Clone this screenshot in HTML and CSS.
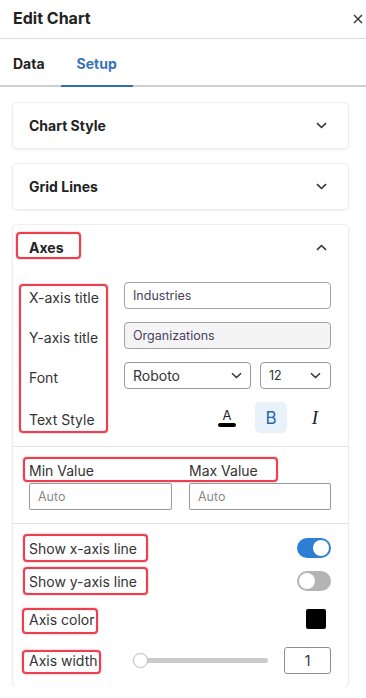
FILE: index.html
```html
<!DOCTYPE html>
<html lang="en">
<head>
    <meta charset="UTF-8">
    <meta name="viewport" content="width=device-width, initial-scale=1.0">
    <title>Edit Chart</title>
    <link rel="stylesheet" href="styles.css">
</head>
<body>
    <div class="panel">
        <header class="panel-header">
            <h1 class="panel-title">Edit Chart</h1>
            <button class="close-btn" aria-label="Close">
                <svg width="10" height="10" viewBox="0 0 10 10"><path d="M1 1L9 9M9 1L1 9" stroke="#333" stroke-width="1.4" fill="none"/></svg>
            </button>
        </header>

        <nav class="tabs">
            <span class="tab">Data</span>
            <span class="tab tab-active">Setup</span>
        </nav>

        <main class="panel-body">
            <section class="card">
                <div class="card-head">
                    <h2 class="card-title">Chart Style</h2>
                    <svg class="chevron" width="11" height="7" viewBox="0 0 11 7"><path d="M1 1.2L5.5 5.5L10 1.2" stroke="#333" stroke-width="1.6" fill="none"/></svg>
                </div>
            </section>

            <section class="card">
                <div class="card-head">
                    <h2 class="card-title">Grid Lines</h2>
                    <svg class="chevron" width="11" height="7" viewBox="0 0 11 7"><path d="M1 1.2L5.5 5.5L10 1.2" stroke="#333" stroke-width="1.6" fill="none"/></svg>
                </div>
            </section>

            <section class="card">
                <div class="card-head">
                    <h2 class="card-title"><span class="mark mark-axes">Axes</span></h2>
                    <svg class="chevron" width="11" height="7" viewBox="0 0 11 7"><path d="M1 5.8L5.5 1.5L10 5.8" stroke="#333" stroke-width="1.6" fill="none"/></svg>
                </div>

                <div class="card-section fields">
                    <div class="label-col">
                        <label class="field-label">X-axis title</label>
                        <label class="field-label">Y-axis title</label>
                        <label class="field-label">Font</label>
                        <label class="field-label field-label-tall">Text Style</label>
                    </div>
                    <div class="control-col">
                        <div class="text-input">Industries</div>
                        <div class="text-input text-input-filled">Organizations</div>
                        <div class="select-row">
                            <div class="select select-font">
                                <span>Roboto</span>
                                <svg width="11" height="7" viewBox="0 0 11 7"><path d="M1 1.2L5.5 5.5L10 1.2" stroke="#333" stroke-width="1.5" fill="none"/></svg>
                            </div>
                            <div class="select select-size">
                                <span>12</span>
                                <svg width="11" height="7" viewBox="0 0 11 7"><path d="M1 1.2L5.5 5.5L10 1.2" stroke="#333" stroke-width="1.5" fill="none"/></svg>
                            </div>
                        </div>
                        <div class="style-btns">
                            <button class="style-btn">
                                <span class="color-a">A</span>
                                <span class="color-bar"></span>
                            </button>
                            <button class="style-btn style-btn-on">B</button>
                            <button class="style-btn style-italic">I</button>
                        </div>
                    </div>
                </div>

                <div class="card-section range-fields">
                    <span class="range-mark"></span>
                    <label class="small-label">Min Value</label>
                    <label class="small-label">Max Value</label>
                    <div class="text-input text-input-square placeholder">Auto</div>
                    <div class="text-input text-input-square placeholder">Auto</div>
                </div>

                <div class="card-section line-rows">
                    <div class="row">
                        <span class="mark mark-line">Show x-axis line</span>
                        <span class="toggle toggle-on"><span class="knob"></span></span>
                    </div>
                    <div class="row">
                        <span class="mark mark-line">Show y-axis line</span>
                        <span class="toggle"><span class="knob"></span></span>
                    </div>
                    <div class="row row-color">
                        <span class="mark mark-color">Axis color</span>
                        <span class="swatch"></span>
                    </div>
                    <div class="row row-width">
                        <span class="row-label"><span class="mark mark-width">Axis width</span></span>
                        <div class="slider">
                            <span class="slider-thumb"></span>
                        </div>
                        <div class="num-box">1</div>
                    </div>
                </div>
            </section>
        </main>
    </div>
</body>
</html>
```

FILE: styles.css
```css
*,::before,::after {
    box-sizing: border-box;
}
body {
    margin: 0;
    font-family: Inter, 'Noto Sans', sans-serif;
    color: #333;
    background: #fff;
    font-size: 14px;
}
h1, h2 {
    margin: 0;
}
button {
    font-family: inherit;
    border: none;
    background: none;
    padding: 0;
    cursor: pointer;
}

/* header */
.panel-header {
    height: 39px;
    padding: 0 3px 0 13px;
    display: flex;
    align-items: center;
    justify-content: space-between;
    border-bottom: 1px solid #dcdcdc;
}
.panel-title {
    font-size: 16px;
    font-weight: 700;
    color: #222;
    padding-bottom: 2px;
}
.close-btn {
    width: 10px;
    height: 10px;
    display: flex;
    margin-bottom: 1px;
}

/* tabs */
.tabs {
    height: 48px;
    display: flex;
    padding-left: 13px;
    border-bottom: 2px solid #cfcfcf;
}
.tab {
    display: flex;
    align-items: center;
    font-weight: 700;
    color: #222;
    padding-right: 16px;
    padding-top: 2px;
}
.tab-active {
    padding: 2px 16px 0;
    color: #3873b8;
    border-bottom: 2px solid #2f6fb8;
    margin-bottom: -2px;
}

/* cards */
.panel-body {
    padding: 16px 18px 0 13px;
    display: flex;
    flex-direction: column;
    gap: 16px;
}
.card {
    background: #fff;
    border-radius: 4px;
    box-shadow: 0 0 0 1px #eeeeee, 0 1px 3px rgba(0, 0, 0, 0.12);
}
.card-head {
    height: 45px;
    padding: 0 21px 0 16px;
    display: flex;
    align-items: center;
    justify-content: space-between;
}
.card-title {
    font-size: 14px;
    font-weight: 700;
    color: #222;
}
.card-section {
    border-top: 1px solid #e3e3e3;
    padding: 0 17px 0 16px;
}
.card-head + .card-section {
    border-top: none;
}

/* annotation marks */
.mark {
    position: relative;
}
.mark::after, .label-col::after, .range-mark {
    content: "";
    position: absolute;
    border: 2px solid #ec3f52;
    border-radius: 4px;
    box-shadow: 0 0 1.5px #f26a78, inset 0 0 1px #f59aa3;
    pointer-events: none;
}
.mark-axes::after {
    top: -7px;
    bottom: -3px;
    left: -13px;
    right: -18px;
}
.mark-line::after {
    top: -6px;
    bottom: -5px;
    left: -6px;
    right: -11px;
}
.mark-color::after {
    top: -3px;
    bottom: -6px;
    left: -7px;
    right: -4px;
}
.mark-width::after {
    top: -2px;
    bottom: -5px;
    left: -7px;
    right: -3px;
}

/* title / font fields */
.fields {
    display: flex;
    padding-top: 12px;
    padding-bottom: 13px;
}
.label-col {
    position: relative;
    width: 95px;
    display: flex;
    flex-direction: column;
    gap: 13px;
}
.label-col::after {
    top: 2px;
    bottom: 0;
    left: -10px;
    right: 16px;
}
.field-label {
    height: 27px;
    display: flex;
    align-items: center;
    padding-top: 3px;
}
.field-label-tall {
    height: 31px;
    padding-top: 4px;
}
.control-col {
    flex: 1;
    display: flex;
    flex-direction: column;
    gap: 13px;
}
.text-input {
    height: 27px;
    border: 1px solid #a3a3a3;
    border-radius: 4px;
    padding: 0 8px;
    display: flex;
    align-items: center;
    font-size: 12.5px;
    color: #4a3f5c;
}
.text-input-filled {
    background: #f4f4f4;
}
.select-row {
    display: flex;
    gap: 9px;
}
.select {
    height: 27px;
    border: 1px solid #999;
    border-radius: 4px;
    padding: 0 8px;
    display: flex;
    align-items: center;
    justify-content: space-between;
    color: #333;
}
.select-font {
    width: 127px;
    font-size: 14px;
}
.select-size {
    flex: 1;
    font-size: 12.5px;
    padding-right: 9px;
}
.style-btns {
    height: 31px;
    display: flex;
    justify-content: flex-end;
    gap: 12px;
}
.style-btn {
    width: 32px;
    height: 31px;
    border-radius: 5px;
    display: flex;
    flex-direction: column;
    align-items: center;
    justify-content: center;
    font-size: 18px;
    color: #222;
}
.color-a {
    font-size: 13px;
    line-height: 12px;
    color: #222;
}
.color-bar {
    width: 18px;
    height: 4px;
    margin-top: 2px;
    border-radius: 2px;
    background: #000;
}
.style-btn-on {
    background: #e9f2fb;
    color: #2266b4;
    font-size: 17px;
    padding-top: 1px;
}
.style-italic {
    font-family: 'Liberation Serif', serif;
    font-style: italic;
    font-size: 19px;
    padding-top: 1px;
}

/* min / max */
.range-fields {
    position: relative;
    display: grid;
    grid-template-columns: 143px 1fr;
    column-gap: 17px;
    row-gap: 4px;
    padding-top: 15px;
    padding-bottom: 13px;
}
.range-mark {
    top: 10px;
    left: 10px;
    width: 255px;
    height: 25px;
}
.small-label {
    line-height: 17px;
}
.text-input-square {
    border-color: #999;
    border-radius: 2px;
}
.placeholder {
    color: #8a8a8a;
    font-size: 12.5px;
}

/* line rows */
.line-rows {
    display: flex;
    flex-direction: column;
    gap: 9px;
    padding-top: 12px;
    padding-bottom: 10px;
}
.row {
    display: flex;
    align-items: center;
    justify-content: space-between;
    min-height: 24px;
}
.row-color {
    min-height: 34px;
}
.row-width {
    min-height: 31px;
    justify-content: flex-start;
}
.toggle {
    width: 34px;
    height: 20px;
    border-radius: 10px;
    background: #b4b4b4;
    padding: 2px;
    display: flex;
}
.toggle-on {
    background: #2e7fd3;
    justify-content: flex-end;
}
.knob {
    width: 16px;
    height: 16px;
    border-radius: 50%;
    background: #fff;
}
.swatch {
    width: 20px;
    height: 20px;
    border-radius: 2px;
    background: #000;
    margin-right: 5px;
}
.row-label {
    width: 104px;
}
.slider {
    position: relative;
    flex: 1;
    height: 5px;
    border-radius: 3px;
    background: #cbcbcb;
    margin-right: 16px;
}
.slider-thumb {
    position: absolute;
    left: 0;
    top: -5px;
    width: 15px;
    height: 15px;
    border-radius: 50%;
    background: #fff;
    border: 1px solid #c4c4c4;
    box-shadow: 0 0 1px rgba(0, 0, 0, 0.2);
}
.num-box {
    width: 47px;
    height: 27px;
    border: 1px solid #8e8e8e;
    border-radius: 3px;
    display: flex;
    align-items: center;
    justify-content: center;
    color: #333;
}
```
